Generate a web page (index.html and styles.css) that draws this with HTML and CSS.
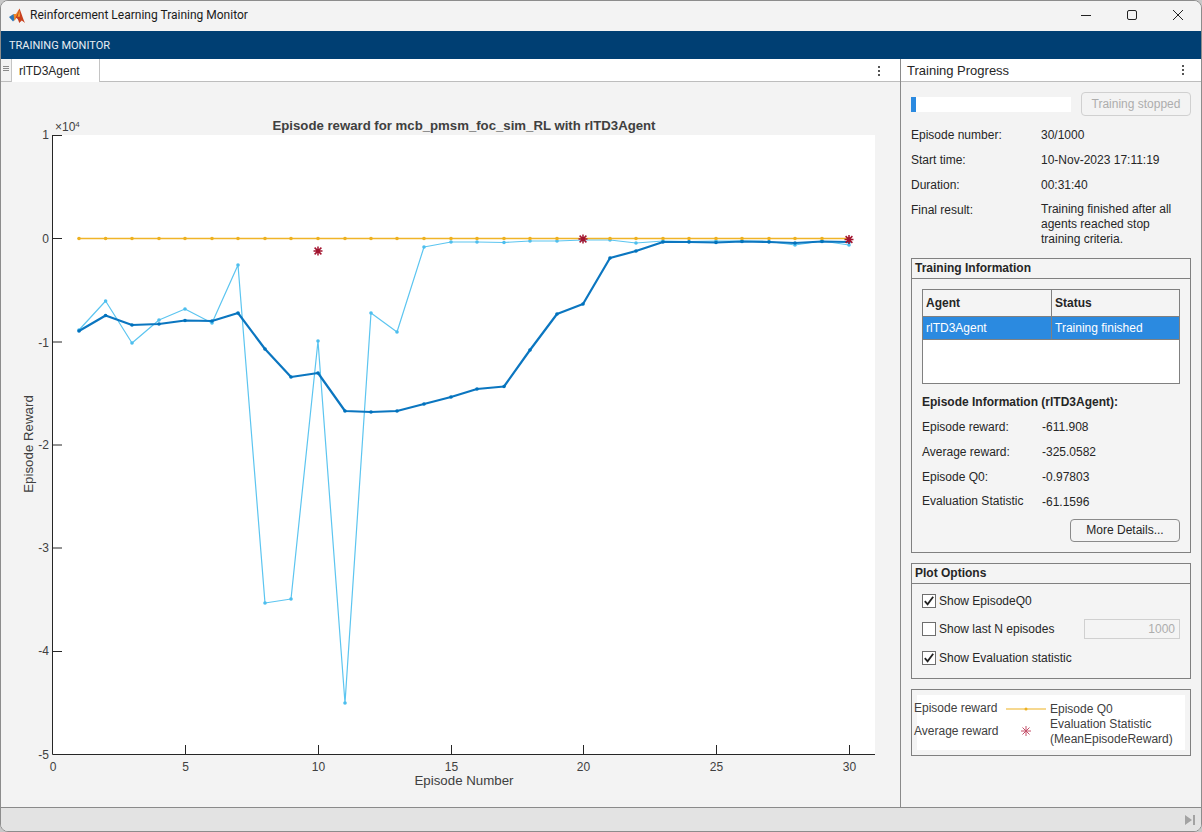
FILE: index.html
```html
<!DOCTYPE html>
<html lang="en">
<head>
<meta charset="utf-8">
<title>Reinforcement Learning Training Monitor</title>
<link rel="stylesheet" href="styles.css">
</head>
<body>
<div class="window">
  <header class="titlebar">
    <svg class="logo" width="18" height="18" viewBox="0 0 18 18">
      <path d="M1 10 5.5 7 9 10 5 14.5Z" fill="#2f78b8"/>
      <path d="M5.5 7 8 7 11.5 1.5 10 8 6.5 14Z" fill="#ef8a2a"/>
      <path d="M11.5 1.5C13 5 15 12 17 16L13.8 13.5 11.2 16C10.5 13 9.5 11 7.5 10.5 9.5 8 10.5 4 11.5 1.5Z" fill="#c8401e"/>
      <path d="M11.5 3 12 9.5 9.5 10Z" fill="#f5a332"/>
    </svg>
    <span class="app-title">Reinforcement Learning Training Monitor</span>
    <div class="winctl">
      <svg width="12" height="12" viewBox="0 0 12 12"><path d="M1 6.5H11" stroke="#222" fill="none"/></svg>
      <svg width="12" height="12" viewBox="0 0 12 12"><rect x="1.5" y="1.5" width="9" height="9" rx="1.5" stroke="#222" fill="none"/></svg>
      <svg width="12" height="12" viewBox="0 0 12 12"><path d="M1 1 11 11M11 1 1 11" stroke="#222" fill="none"/></svg>
    </div>
  </header>
  <div class="ribbon">TRAINING MONITOR</div>
  <div class="main">
    <section class="left">
      <div class="tabbar">
        <div class="grip"><i></i><i></i><i></i></div>
        <div class="tab">rlTD3Agent</div>
        <div class="kebab"><i></i><i></i><i></i></div>
      </div>
      <svg class="plot" width="899" height="727" viewBox="1 82 899 727">
        <defs>
          <marker id="mo" markerUnits="userSpaceOnUse" markerWidth="5" markerHeight="5" refX="2.5" refY="2.5"><circle cx="2.5" cy="2.5" r="1.8" fill="#edb120"/></marker>
          <marker id="ml" markerUnits="userSpaceOnUse" markerWidth="5" markerHeight="5" refX="2.5" refY="2.5"><circle cx="2.5" cy="2.5" r="1.8" fill="#4dbeee"/></marker>
          <marker id="md" markerUnits="userSpaceOnUse" markerWidth="5" markerHeight="5" refX="2.5" refY="2.5"><circle cx="2.5" cy="2.5" r="1.8" fill="#0072bd"/></marker>
          <g id="star" stroke="#a2142f" stroke-width="1.5" fill="none"><path d="M-4.5 0H4.5M0-4.5V4.5M-3.4-3.4 3.4 3.4M3.4-3.4-3.4 3.4"/></g>
        </defs>
        <rect x="53" y="135" width="822" height="619" fill="#fff"/>
        <polyline class="s-light" points="79,330 105.6,301 132,343 159,320 185,309 212,323 238,265 265,603 291,599 318,341 345,703 371,313 397,332 424,247 451,242 477,242 504,242.5 530,241 557,241 583,240 610,240 636,243 663,241 689,241.5 716,241 742,241 769,241.5 795,245 822,241 849,245"/>
        <polyline class="s-dark" points="79,331 105.6,315.5 132,325 159,324 185,320.5 212,321 238,313 265,349 291,377 318,373 345,411 371,412 397,411 424,404 451,397 477,389 504,386.5 530,350 557,314 583,304 610,258 636,251 663,242 689,242 716,242.5 742,241.5 769,242 795,243 822,241.5 849,242"/>
        <polyline class="s-orange" points="79,238.5 105.6,238.5 132,238.5 159,238.5 185,238.5 212,238.5 238,238.5 265,238.5 291,238.5 318,238.5 345,238.5 371,238.5 397,238.5 424,238.5 451,238.5 477,238.5 504,238.5 530,238.5 557,238.5 583,238.5 610,238.5 636,238.5 663,238.5 689,238.5 716,238.5 742,238.5 769,238.5 795,238.5 822,238.5 849,238.5"/>
        <use href="#star" x="318" y="251"/>
        <use href="#star" x="583" y="239"/>
        <use href="#star" x="849" y="239.5"/>
        <path class="axis" d="M52.5 135V754.5H875"/>
        <path class="axis" d="M52.5 135.5H62M52.5 238.5H62M52.5 342H62M52.5 445H62M52.5 548H62M52.5 651.5H62M185.5 754V745M318.5 754V745M451.5 754V745M583.5 754V745M716.5 754V745M849.5 754V745"/>
        <text class="title" x="464" y="130" text-anchor="middle">Episode reward for mcb_pmsm_foc_sim_RL with rlTD3Agent</text>
        <text class="tick" x="55" y="131">×10<tspan class="sup" dy="-4">4</tspan></text>
        <g class="tick" text-anchor="end">
          <text x="49" y="139">1</text><text x="49" y="243">0</text><text x="49" y="347">-1</text><text x="49" y="449">-2</text><text x="49" y="552">-3</text><text x="49" y="655">-4</text><text x="49" y="759">-5</text>
        </g>
        <g class="tick" text-anchor="middle">
          <text x="53" y="771">0</text><text x="185.5" y="771">5</text><text x="318.5" y="771">10</text><text x="451.5" y="771">15</text><text x="583.5" y="771">20</text><text x="716.5" y="771">25</text><text x="849.5" y="771">30</text>
        </g>
        <text class="label" x="464" y="785" text-anchor="middle">Episode Number</text>
        <text class="label" transform="translate(33 444) rotate(-90)" text-anchor="middle">Episode Reward</text>
      </svg>
    </section>
    <aside class="right">
      <div class="tabbar side-head">
        <span class="side-title">Training Progress</span>
        <div class="kebab"><i></i><i></i><i></i></div>
      </div>
      <div class="side-body">
        <div class="progress-row">
          <div class="progress"><div class="fill"></div></div>
          <div class="btn disabled">Training stopped</div>
        </div>
        <div class="kv"><span>Episode number:</span><span>30/1000</span></div>
        <div class="kv"><span>Start time:</span><span>10-Nov-2023 17:11:19</span></div>
        <div class="kv"><span>Duration:</span><span>00:31:40</span></div>
        <div class="kv result"><span>Final result:</span><span>Training finished after all agents reached stop training criteria.</span></div>

        <div class="group info">
          <div class="group-head">Training Information</div>
          <div class="group-body">
            <div class="table">
              <div class="thead"><span>Agent</span><span>Status</span></div>
              <div class="tsel"><span>rlTD3Agent</span><span>Training finished</span></div>
              <div class="tempty"></div>
            </div>
            <div class="ep-title">Episode Information (rlTD3Agent):</div>
            <div class="ep"><span>Episode reward:</span><span>-611.908</span></div>
            <div class="ep"><span>Average reward:</span><span>-325.0582</span></div>
            <div class="ep"><span>Episode Q0:</span><span>-0.97803</span></div>
            <div class="ep last"><span>Evaluation Statistic</span><span>-61.1596</span></div>
            <div class="btn-row"><div class="btn details">More Details...</div></div>
          </div>
        </div>

        <div class="group options">
          <div class="group-head">Plot Options</div>
          <div class="group-body opt-body">
            <div class="opt"><span class="check on"><svg width="12" height="12" viewBox="0 0 12 12"><path d="M1.8 6.2 4.6 9.4 10.2 1.8" stroke="#222" stroke-width="1.8" fill="none"/></svg></span>Show EpisodeQ0</div>
            <div class="opt"><span class="check"></span>Show last N episodes<span class="input">1000</span></div>
            <div class="opt"><span class="check on"><svg width="12" height="12" viewBox="0 0 12 12"><path d="M1.8 6.2 4.6 9.4 10.2 1.8" stroke="#222" stroke-width="1.8" fill="none"/></svg></span>Show Evaluation statistic</div>
          </div>
        </div>

        <div class="legend">
          <div class="legend-in">
            <div class="lg-col">
              <span>Episode reward</span>
              <span>Average reward</span>
            </div>
            <div class="lg-keys">
              <svg width="40" height="54" viewBox="0 0 40 54">
                <path d="M0 14H40" stroke="#edb120" fill="none"/><circle cx="20" cy="14" r="1.5" fill="#edb120"/>
                <path d="M20 31V41M15 36H25M16.5 32.5 23.5 39.5M23.5 32.5 16.5 39.5" stroke="#c4506a" fill="none"/>
              </svg>
            </div>
            <div class="lg-text">
              <span class="lg-q">Episode Q0</span>
              <span>Evaluation Statistic<br>(MeanEpisodeReward)</span>
            </div>
          </div>
        </div>
      </div>
    </aside>
  </div>
  <footer class="status">
    <svg width="12" height="12" viewBox="0 0 12 12"><path d="M1 1 8 6 1 11Z M9 1H11V11H9Z" fill="#a3a3a3"/></svg>
  </footer>
</div>
</body>
</html>
```
FILE: styles.css
```css
* { box-sizing: border-box; }
html, body { margin: 0; height: 100%; }
body {
  width: 1202px; height: 832px; overflow: hidden;
  background: #c8c8c8;
  font: 12px/15px "Liberation Sans", Arial, sans-serif;
  color: #262626;
}
.window {
  width: 1202px; height: 832px;
  display: flex; flex-direction: column;
  background: #f3f3f3;
  border: 1px solid #8c8c8c;
  border-radius: 8px;
  overflow: hidden;
}
.titlebar {
  height: 30px; flex: none;
  display: flex; align-items: center;
  background: #f3f3f3;
  padding-left: 7px;
}
.logo { flex: none; margin-right: 4px; margin-top: -1px; }
.app-title { font: 12px Roboto, "Noto Sans", sans-serif; color: #1a1a1a; margin-top: -2px; }
.winctl { margin-left: auto; display: flex; gap: 34px; padding-right: 17px; margin-top: -2px; }
.ribbon {
  height: 28px; flex: none;
  background: #003f73; color: #e8eef4;
  font: 11px/30px Roboto, "Noto Sans", sans-serif;
  padding-left: 8px;
}
.main { flex: 1; display: flex; min-height: 0; }
.left { width: 899px; flex: none; display: flex; flex-direction: column; background: #f3f3f3; }
.right { flex: 1; border-left: 1px solid #8a8a8a; display: flex; flex-direction: column; background: #f3f3f3; }
.tabbar {
  height: 23px; flex: none;
  display: flex; align-items: stretch;
  background: #fff;
  border-bottom: 1px solid #bdbdbd;
}
.grip { width: 10px; padding: 7px 2px 0; display: flex; flex-direction: column; gap: 1px; background: #f3f3f3; border-bottom: 0; }
.grip i { display: block; height: 1px; background: #8a8a8a; }
.tab {
  width: 89px; margin-bottom: -1px;
  background: #fff;
  border-left: 1px solid #c4c4c4; border-right: 1px solid #c4c4c4;
  padding: 5px 0 0 7px;
  color: #262626;
}
.kebab { margin-left: auto; padding: 7px 20px 0 0; display: flex; flex-direction: column; gap: 2px; }
.kebab i { display: block; width: 2px; height: 2px; background: #555; }
.plot { display: block; flex: none; }
.s-light, .s-dark, .s-orange { fill: none; stroke-linejoin: round; }
.s-light { stroke: #5cc5f0; stroke-width: 1.2; marker: url(#ml); }
.s-dark { stroke: #0b76c0; stroke-width: 2.2; marker: url(#md); }
.s-orange { stroke: #f0b429; stroke-width: 1.4; marker: url(#mo); }
.axis { stroke: #262626; stroke-width: 1; fill: none; }
.title { font: bold 13.2px "Liberation Sans", Arial, sans-serif; fill: #404040; }
.tick, .tick text { font: 12px "Liberation Sans", Arial, sans-serif; fill: #404040; }
.sup { font-size: 8px; }
.label { font: 13.3px "Liberation Sans", Arial, sans-serif; fill: #404040; }
.side-head { padding-left: 6px; align-items: center; }
.side-title { font-size: 13px; }
.side-head .kebab { padding: 0 17px 0 0; }
.side-body { flex: 1; padding: 10px 10px 0; }
.progress-row { display: flex; align-items: center; height: 24px; gap: 10px; margin-bottom: 7px; }
.progress { width: 160px; height: 15px; background: #fff; }
.fill { width: 5px; height: 100%; background: #2b8ae0; }
.btn {
  width: 110px; height: 24px;
  border: 1px solid #8a8a8a; border-radius: 4px;
  display: flex; align-items: center; justify-content: center;
  color: #262626;
}
.btn.details { height: 23px; }
.btn.disabled { border-color: #d0d0d0; color: #adadad; }
.kv { display: flex; height: 25px; align-items: center; }
.kv span:first-child { width: 130px; flex: none; }
.kv.result { height: auto; align-items: flex-start; margin-top: 4px; }
.kv.result span:first-child { padding-top: 1px; }
.kv.result span:last-child { width: 140px; }
.group { border: 1px solid #808080; background: #f4f4f4; width: 280px; }
.group-head { height: 20px; border-bottom: 1px solid #808080; padding: 1px 3px 0; font-weight: bold; line-height: 17px; }
.info { height: 295px; margin-top: 11px; }
.group-body { padding: 10px 10px 0; }
.table { border: 1px solid #808080; height: 95px; display: flex; flex-direction: column; background: #fff; }
.thead, .tsel { display: grid; grid-template-columns: 129px 1fr; flex: none; }
.thead { height: 27px; background: #f4f4f4; border-bottom: 1px solid #808080; font-weight: bold; }
.thead span, .tsel span { padding-left: 3px; display: flex; align-items: center; }
.thead span { padding-top: 1px; }
.thead span:first-child, .tsel span:first-child { border-right: 1px solid #808080; }
.tsel { height: 23px; background: #2b8ae0; color: #fff; border-bottom: 1px solid #808080; }
.ep-title { font-weight: bold; margin-top: 11px; height: 15px; }
.ep { display: flex; height: 25px; align-items: center; }
.ep-title + .ep { margin-top: 5px; }
.ep span:first-child { width: 120px; flex: none; }
.ep.last span:first-child { margin-top: -2px; }
.btn-row { display: flex; justify-content: flex-end; margin-top: 4px; }
.options { height: 116px; margin-top: 10px; }
.opt-body { padding: 0 10px; }
.opt { display: flex; align-items: center; height: 28px; }
.opt:first-child { margin-top: 3px; }
.opt:last-child { margin-top: 1px; }
.check {
  width: 14px; height: 14px; flex: none; margin-right: 3px;
  border: 1px solid #6e6e6e; background: #fff;
  display: flex; align-items: center; justify-content: center;
}
.input {
  margin-left: auto; width: 96px; height: 20px;
  border: 1px solid #d0d0d0; background: #f4f4f4;
  color: #adadad; text-align: right; padding: 2px 4px 0 0;
}
.legend { width: 280px; height: 67px; margin-top: 10px; border: 1px solid #808080; padding: 5px; background: #f4f4f4; }
.legend-in { height: 55px; background: #fff; display: flex; color: #404040; }
.lg-col { width: 92px; margin-left: -3px; display: flex; flex-direction: column; padding-top: 6px; gap: 8px; flex: none; }
.lg-keys { width: 44px; flex: none; height: 54px; }
.lg-text { display: flex; flex-direction: column; padding-top: 7px; }
.status {
  height: 24px; flex: none;
  background: #e3e3e3; border-top: 1px solid #8a8a8a;
  display: flex; justify-content: flex-end; align-items: center;
  padding-right: 5px;
}
```
